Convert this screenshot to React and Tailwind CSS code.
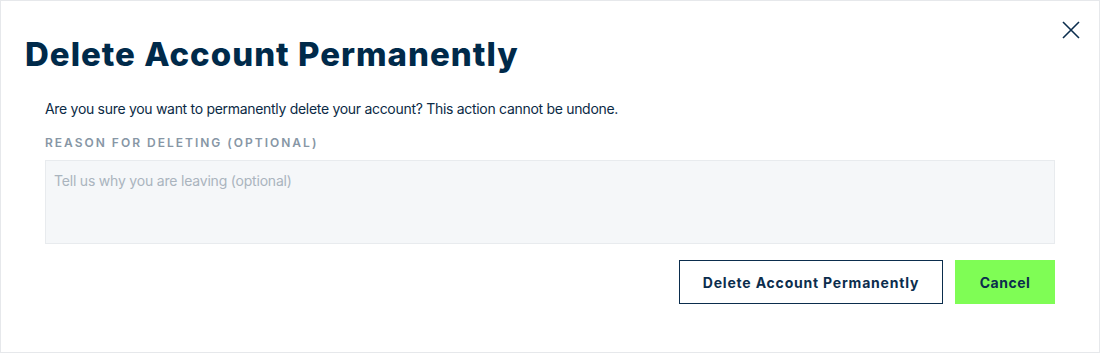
import React from "react";

export default function App() {
  return (
    <div className="w-[1100px] h-[353px] bg-white border border-[#e6e8eb] relative font-['Inter',sans-serif]">
      <button className="absolute right-[19px] top-[20px] w-[18px] h-[18px] text-[#0b2d4d]">
        <svg viewBox="0 0 18 18" width="18" height="18" fill="none" stroke="currentColor" strokeWidth="1.6">
          <path d="M1 1 L17 17 M17 1 L1 17" />
        </svg>
      </button>
      <div className="pl-[24px] pt-[33px]">
        <h1 className="text-[33px] leading-[40px] font-extrabold text-[#002a4a] tracking-[1px]">
          Delete Account Permanently
        </h1>
      </div>
      <div className="px-[44px] pt-[25px]">
        <p className="text-[14px] leading-[20px] text-[#0b2a45] tracking-[-0.3px]">
          Are you sure you want to permanently delete your account? This action cannot be undone.
        </p>
        <label className="block mt-[16px] text-[12px] leading-[16px] font-semibold tracking-[2px] uppercase text-[#8796a5]">
          Reason for deleting (optional)
        </label>
        <textarea
          className="mt-[9px] block w-full h-[84px] bg-[#f5f7f9] border border-[#e8ebee] px-[8px] py-[10px] text-[14px] leading-[20px] text-[#0b2a45] placeholder:text-[#aab4be] resize-none outline-none tracking-[-0.2px]"
          placeholder="Tell us why you are leaving (optional)"
        />
        <div className="flex justify-end gap-[12px] mt-[16px]">
          <button className="w-[264px] h-[44px] border border-[#0b2d4d] text-[14px] font-bold text-[#0b2d4d] bg-white tracking-[0.8px]">
            Delete Account Permanently
          </button>
          <button className="w-[100px] h-[44px] bg-[#7ffd55] text-[14px] font-bold text-[#0b2d4d] tracking-[0.5px]">
            Cancel
          </button>
        </div>
      </div>
    </div>
  );
}
